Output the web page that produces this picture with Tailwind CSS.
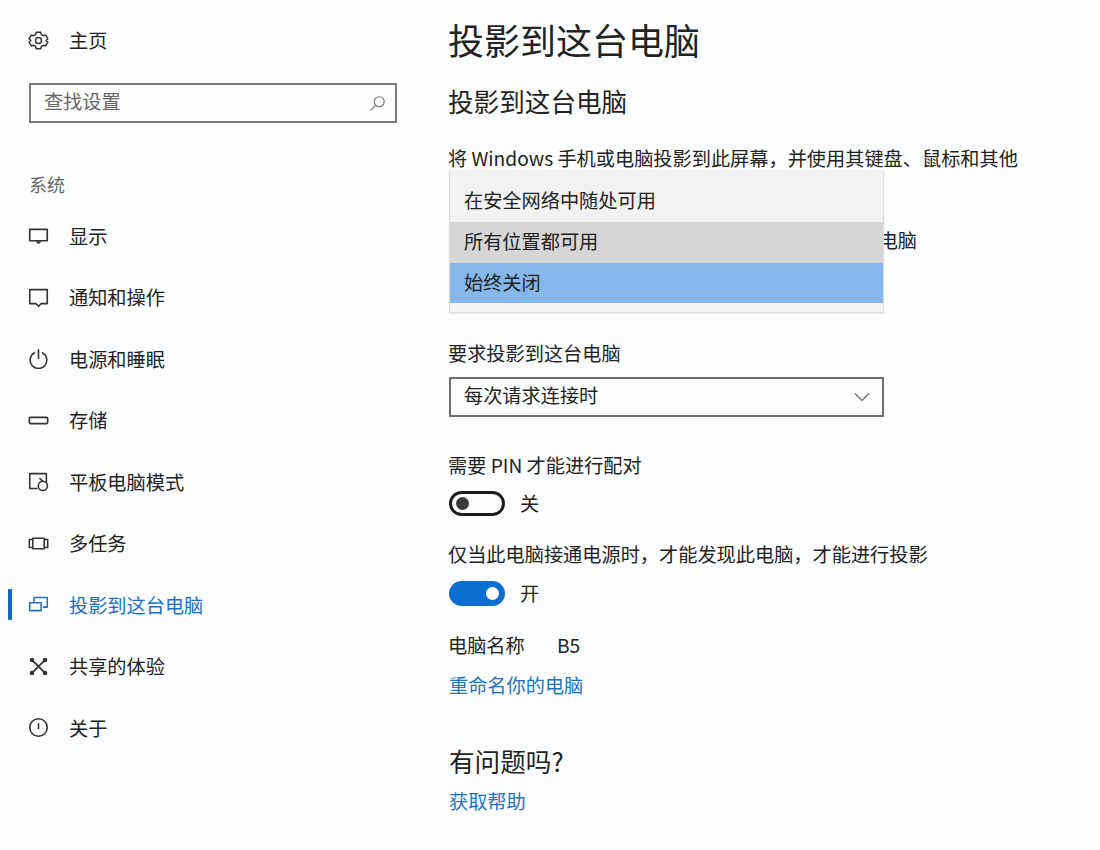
<!DOCTYPE html>
<html lang="zh-CN">
<head>
  <meta charset="UTF-8" />
  <title>投影到这台电脑</title>
  <script src="https://cdn.jsdelivr.net/npm/@tailwindcss/browser@4"></script>
</head>
<body class="bg-[#fcfdfe] text-[#222222] font-['Noto_Sans_CJK_SC',sans-serif] text-[19.2px] leading-[28px]">
  <div class="flex w-[1100px] h-[850px] overflow-hidden">

    <!-- Sidebar -->
    <aside class="w-[449px] shrink-0 flex flex-col pl-[28px]">
      <div class="flex items-center gap-[20px] h-[28px] mt-[26px]">
        <svg class="w-[21px] h-[21px] shrink-0" viewBox="0 0 24 24" fill="none" stroke="#333" stroke-width="1.7" stroke-linejoin="round">
          <path d="M9.5 2.5h5l.8 2.7 2.3 1.3 2.7-.7 2.4 4.2-2 2 2 2-2.4 4.2-2.7-.7-2.3 1.3-.8 2.7h-5l-.8-2.7-2.3-1.3-2.7.7-2.4-4.2 2-2-2-2 2.4-4.2 2.7.7 2.3-1.3z" />
          <circle cx="12" cy="12" r="3.4" />
        </svg>
        <span>主页</span>
      </div>
      <div class="w-[368px] h-[40px] mt-[29px] ml-[1px] border-2 border-[#7b7b7b] bg-[#fdfdfe] flex items-center justify-between pl-[13px] pr-[9px] text-[#666666]">
        <span class="pb-[5px]">查找设置</span>
        <svg class="w-[17px] h-[17px]" viewBox="0 0 24 24" fill="none" stroke="#777" stroke-width="1.6">
          <circle cx="14.5" cy="9.5" r="7" />
          <path d="M9.5 14.5 2 22" />
        </svg>
      </div>
      <div class="mt-[47px] h-[28px] ml-[1px] text-[18px] text-[#666666]">系统</div>

      <nav class="mt-[7px] flex flex-col">
        <a class="flex items-center gap-[20px] h-[61.5px]">
          <svg class="w-[21px] h-[21px] shrink-0" viewBox="0 0 24 24" fill="none" stroke="#333" stroke-width="1.9" stroke-linejoin="round">
            <path d="M2 5h20v13H2z" />
            <path d="M9 18.5h6l-1.5 2.5h-3z" fill="#333" stroke="none" />
          </svg>
          <span>显示</span>
        </a>
        <a class="flex items-center gap-[20px] h-[61.5px]">
          <svg class="w-[21px] h-[21px] shrink-0" viewBox="0 0 24 24" fill="none" stroke="#333" stroke-width="1.8" stroke-linejoin="round">
            <path d="M2 3h20v16h-7l-3 3-3-3H2z" />
          </svg>
          <span>通知和操作</span>
        </a>
        <a class="flex items-center gap-[20px] h-[61.5px]">
          <svg class="w-[21px] h-[21px] shrink-0" viewBox="0 0 24 24" fill="none" stroke="#333" stroke-width="1.8" stroke-linecap="round">
            <path d="M7.5 5.5a9.5 9.5 0 1 0 9 0" />
            <path d="M12 2v10" />
          </svg>
          <span>电源和睡眠</span>
        </a>
        <a class="flex items-center gap-[20px] h-[61.5px]">
          <svg class="w-[21px] h-[21px] shrink-0" viewBox="0 0 24 24" fill="none" stroke="#333" stroke-width="1.9">
            <rect x="1.5" y="8.5" width="21" height="7" rx="1.5" />
          </svg>
          <span>存储</span>
        </a>
        <a class="flex items-center gap-[20px] h-[61.5px]">
          <svg class="w-[21px] h-[21px] shrink-0" viewBox="0 0 24 24" fill="none" stroke="#333" stroke-width="1.8" stroke-linejoin="round">
            <path d="M11 20H2V3h19v10" />
            <circle cx="17" cy="17" r="5.2" />
            <path d="M17 11.8 13 8" />
          </svg>
          <span>平板电脑模式</span>
        </a>
        <a class="flex items-center gap-[20px] h-[61.5px]">
          <svg class="w-[21px] h-[21px] shrink-0" viewBox="0 0 24 24" fill="none" stroke="#333" stroke-width="1.8" stroke-linejoin="round">
            <rect x="5.5" y="6" width="13" height="12" />
            <path d="M5.5 7.5H1.5v9h4M18.5 7.5h4v9h-4" />
          </svg>
          <span>多任务</span>
        </a>
        <a class="relative flex items-center gap-[20px] h-[61.5px] text-[#1a6fc4]">
          <span class="absolute left-[-20px] top-[15px] w-[4px] h-[31px] rounded-[1px] bg-[#1467c0]"></span>
          <svg class="w-[21px] h-[21px] shrink-0" viewBox="0 0 24 24" fill="none" stroke="#2273bd" stroke-width="1.8" stroke-linejoin="round">
            <path d="M7 9V4h15v11h-5" />
            <path d="M2 10h13v9H2z" />
          </svg>
          <span>投影到这台电脑</span>
        </a>
        <a class="flex items-center gap-[20px] h-[61.5px]">
          <svg class="w-[21px] h-[21px] shrink-0" viewBox="0 0 24 24" fill="#333" stroke="#333" stroke-width="2">
            <path d="M5 5l14 14M19 5 5 19" />
            <circle cx="4.5" cy="4.5" r="1.6" />
            <circle cx="19.5" cy="4.5" r="1.6" />
            <circle cx="4.5" cy="19.5" r="1.6" />
            <circle cx="19.5" cy="19.5" r="1.6" />
          </svg>
          <span>共享的体验</span>
        </a>
        <a class="flex items-center gap-[20px] h-[61.5px]">
          <svg class="w-[21px] h-[21px] shrink-0" viewBox="0 0 24 24" fill="none" stroke="#333" stroke-width="1.8">
            <circle cx="12" cy="12" r="10" />
            <path d="M12 7v7" />
          </svg>
          <span>关于</span>
        </a>
      </nav>
    </aside>

    <!-- Main -->
    <main class="relative flex-1 flex flex-col">
      <h1 class="mt-[14px] ml-[-1px] h-[50px] leading-[50px] text-[36px] whitespace-nowrap">投影到这台电脑</h1>
      <h2 class="mt-[19px] ml-[-1px] h-[36px] leading-[36px] text-[25.6px] whitespace-nowrap">投影到这台电脑</h2>
      <p class="mt-[25px] ml-[-1px] whitespace-nowrap">将 Windows 手机或电脑投影到此屏幕，并使用其键盘、鼠标和其他</p>
      <p class="mt-[54px] w-[468px] flex justify-end whitespace-nowrap">电脑</p>

      <!-- Open dropdown -->
      <div class="absolute left-0 top-[170px] w-[435px] h-[143px] bg-[#f2f2f2] border border-[#dedede] border-t-0 shadow-[0_1px_2px_rgba(0,0,0,0.08)]">
        <div class="h-[52px] flex items-center pl-[14px] pt-[7px]">在安全网络中随处可用</div>
        <div class="h-[41px] flex items-center pl-[14px] pb-[3px] bg-[#d6d6d6]">所有位置都可用</div>
        <div class="h-[40px] flex items-center pl-[14px] pb-[2px] bg-[#85b8e8]">始终关闭</div>
      </div>

      <div class="mt-[85px] ml-[-1px]">要求投影到这台电脑</div>
      <div class="mt-[10px] w-[435px] h-[40px] border-2 border-[#6f6f6f] flex items-center justify-between pl-[13px] pr-[12px]">
        <span class="pb-[5px]">每次请求连接时</span>
        <svg class="w-[16px] h-[10px]" viewBox="0 0 16 10" fill="none" stroke="#666" stroke-width="1.2">
          <path d="M1 1.5 8 8.5 15 1.5" />
        </svg>
      </div>

      <div class="mt-[34px] ml-[-1px] whitespace-nowrap">需要 PIN 才能进行配对</div>
      <div class="mt-[11px] flex items-center gap-[15px] h-[26px]">
        <span class="w-[56px] h-[25px] rounded-full border-[3px] border-[#1c1c1c] flex items-center pl-[4px]">
          <span class="w-[13px] h-[13px] rounded-full bg-[#3a3a3a]"></span>
        </span>
        <span>关</span>
      </div>

      <div class="mt-[24px] ml-[-1px] whitespace-nowrap">仅当此电脑接通电源时，才能发现此电脑，才能进行投影</div>
      <div class="mt-[12px] flex items-center gap-[15px] h-[26px]">
        <span class="w-[56px] h-[25px] rounded-full bg-[#0a6fd0] flex items-center justify-end pr-[6px]">
          <span class="w-[13px] h-[13px] rounded-full bg-white"></span>
        </span>
        <span>开</span>
      </div>

      <div class="mt-[25px] ml-[-1px] flex whitespace-nowrap">
        <span class="w-[109px]">电脑名称</span>
        <span>B5</span>
      </div>
      <a class="mt-[12px] text-[#2273bd]">重命名你的电脑</a>

      <h3 class="mt-[44px] h-[36px] leading-[36px] text-[25.6px]">有问题吗?</h3>
      <a class="mt-[8px] text-[#2273bd]">获取帮助</a>
    </main>
  </div>
</body>
</html>
